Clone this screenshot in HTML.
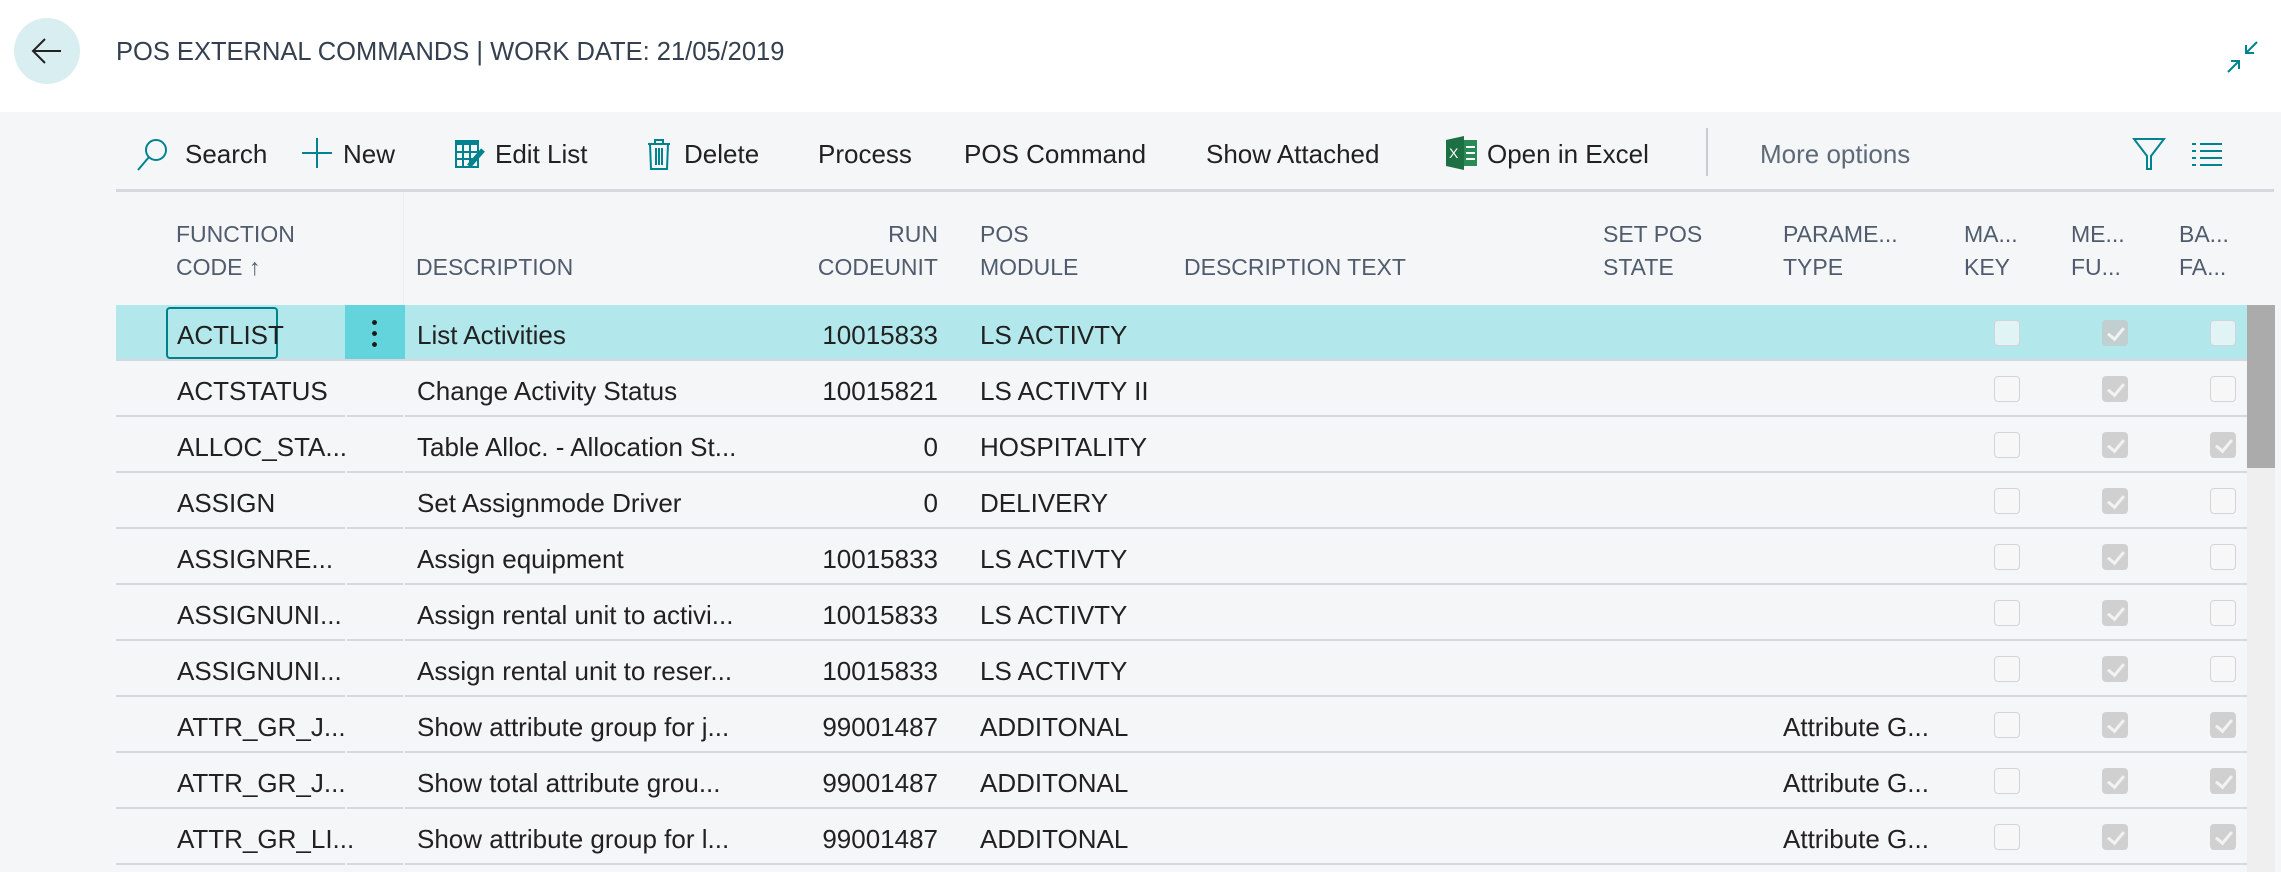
<!DOCTYPE html>
<html><head><meta charset="utf-8"><style>
*{box-sizing:border-box;margin:0;padding:0}
body{width:2281px;height:872px;overflow:hidden;background:#f5f6f8;font-family:"Liberation Sans",sans-serif;position:relative;color:#212121}
.hdr{position:absolute;left:0;top:0;width:2281px;height:112px;background:#fff}
.abs{position:absolute;white-space:nowrap}
.tb{font-size:26px;color:#212121;top:139px;line-height:30px}
.th{font-size:23px;color:#505c6d;line-height:33px}
.row{position:absolute;left:116px;width:2131px;height:56px;border-bottom:2px solid #d6d8dd}
.c{position:absolute;top:3px;line-height:54px;font-size:26px;white-space:nowrap}
.cb{position:absolute;top:15px;width:26px;height:26px;border:1.5px solid #d2d4d8;border-radius:4px;background:#f7f7f7}
.ck{background:#d0d0d0;border-color:#d0d0d0}
.ck::after{content:"";position:absolute;left:8px;top:3px;width:7px;height:13px;border:solid #f2f2f2;border-width:0 3px 3px 0;transform:rotate(40deg)}
</style></head><body>
<div class="hdr"></div>
<div class="abs" style="left:14px;top:18px;width:66px;height:66px;border-radius:50%;background:#d9eef1"></div>
<svg class="abs" style="left:30px;top:34px" width="34" height="34" viewBox="0 0 34 34"><path d="M31 17H4M15 5L3 17l12 12" fill="none" stroke="#222" stroke-width="2"/></svg>
<div class="abs" style="left:116px;top:37px;font-size:25.5px;color:#34404f;line-height:30px">POS EXTERNAL COMMANDS | WORK DATE: 21/05/2019</div>
<svg class="abs" style="left:2226px;top:40px" width="34" height="34" viewBox="0 0 34 34" fill="none" stroke="#00838f" stroke-width="2"><path d="M31 2L20 13M20 5v8h8M2 32l11-11M13 29v-8H5"/></svg>

<svg class="abs" style="left:135px;top:137px" width="34" height="34" viewBox="0 0 34 34" fill="none" stroke="#00838f" stroke-width="2"><circle cx="21" cy="13" r="10"/><path d="M14 20L3 33"/></svg>
<div class="abs tb" style="left:185px">Search</div>
<svg class="abs" style="left:302px;top:138px" width="30" height="30" viewBox="0 0 30 30" stroke="#00838f" stroke-width="2"><path d="M15 0v30M0 15h30"/></svg>
<div class="abs tb" style="left:343px">New</div>
<svg class="abs" style="left:455px;top:140px" width="30" height="28" viewBox="0 0 30 28"><rect x="0" y="0" width="24" height="5" fill="#00838f"/><path d="M1 5v22h22V5M1 12h22M1 19h22M8 5v22M15 5v22" fill="none" stroke="#00838f" stroke-width="2"/><path d="M14 26l14-16" stroke="#00838f" stroke-width="5"/></svg>
<div class="abs tb" style="left:495px">Edit List</div>
<svg class="abs" style="left:647px;top:138px" width="24" height="32" viewBox="0 0 24 32" fill="none" stroke="#00838f" stroke-width="2"><path d="M1 6h22M8 6V2h8v4M3 6l1 25h16l1-25M9 10v17M12 10v17M15 10v17"/></svg>
<div class="abs tb" style="left:684px">Delete</div>
<div class="abs tb" style="left:818px">Process</div>
<div class="abs tb" style="left:964px">POS Command</div>
<div class="abs tb" style="left:1206px">Show Attached</div>
<svg class="abs" style="left:1446px;top:136px" width="32" height="34" viewBox="0 0 32 34"><path d="M0 4l18-4v34L0 30z" fill="#1d7044"/><rect x="18" y="4" width="13" height="26" fill="#2a8a55"/><path d="M20 11h9M20 17h9M20 23h9" stroke="#fff" stroke-width="2"/><text x="3" y="22" font-size="14" fill="#fff" font-family="Liberation Sans">X</text></svg>
<div class="abs tb" style="left:1487px">Open in Excel</div>
<div class="abs" style="left:1706px;top:128px;width:2px;height:48px;background:#c8cbd0"></div>
<div class="abs tb" style="left:1760px;color:#5e6a78">More options</div>
<svg class="abs" style="left:2132px;top:136px" width="34" height="34" viewBox="0 0 34 34" fill="none" stroke="#00838f" stroke-width="2"><path d="M2 3h30L19 20v13h-4V20z"/></svg>
<svg class="abs" style="left:2192px;top:142px" width="30" height="24" viewBox="0 0 30 24" stroke="#00838f" stroke-width="2"><path d="M0 2h4M8 2h22M0 9h4M8 9h22M0 16h4M8 16h22M0 23h4M8 23h22"/></svg>

<div class="abs" style="left:116px;top:189px;width:2158px;height:3px;background:#d6d8dd"></div>
<div class="abs" style="left:403px;top:192px;width:1px;height:113px;background:#eceef1"></div>
<div class="abs th" style="left:176px;top:218px">FUNCTION<br>CODE ↑</div>
<div class="abs th" style="left:416px;top:251px">DESCRIPTION</div>
<div class="abs th" style="left:760px;width:178px;text-align:right;top:218px">RUN<br>CODEUNIT</div>
<div class="abs th" style="left:980px;top:218px">POS<br>MODULE</div>
<div class="abs th" style="left:1184px;top:251px">DESCRIPTION TEXT</div>
<div class="abs th" style="left:1603px;top:218px">SET POS<br>STATE</div>
<div class="abs th" style="left:1783px;top:218px">PARAME...<br>TYPE</div>
<div class="abs th" style="left:1964px;top:218px">MA...<br>KEY</div>
<div class="abs th" style="left:2071px;top:218px">ME...<br>FU...</div>
<div class="abs th" style="left:2179px;top:218px">BA...<br>FA...</div>

<div class="abs" style="left:2247px;top:305px;width:28px;height:567px;background:#efefef"></div>
<div class="abs" style="left:2247px;top:305px;width:28px;height:163px;background:#ababab"></div>

<div id="rows"></div>
<script>
var d=[["ACTLIST","List Activities","10015833","LS ACTIVTY","",0],
["ACTSTATUS","Change Activity Status","10015821","LS ACTIVTY II","",0],
["ALLOC_STA...","Table Alloc. - Allocation St...","0","HOSPITALITY","",1],
["ASSIGN","Set Assignmode Driver","0","DELIVERY","",0],
["ASSIGNRE...","Assign equipment","10015833","LS ACTIVTY","",0],
["ASSIGNUNI...","Assign rental unit to activi...","10015833","LS ACTIVTY","",0],
["ASSIGNUNI...","Assign rental unit to reser...","10015833","LS ACTIVTY","",0],
["ATTR_GR_J...","Show attribute group for j...","99001487","ADDITONAL","Attribute G...",1],
["ATTR_GR_J...","Show total attribute grou...","99001487","ADDITONAL","Attribute G...",1],
["ATTR_GR_LI...","Show attribute group for l...","99001487","ADDITONAL","Attribute G...",1]];
var h="";
d.forEach(function(r,i){
var top=305+i*56;var sel=i==0;
h+='<div class="row" style="top:'+top+'px;'+(sel?'background:#b2e8ec;':'')+'">';
if(sel){h+='<div class="abs" style="left:229px;top:0;width:60px;height:54px;background:#63d3dc"></div><div class="abs" style="left:256px;top:12px;width:5px;height:30px;background:radial-gradient(circle,#1a1a1a 2.2px,transparent 2.6px) 0 0/5px 11px repeat-y"></div><div class="abs" style="left:50px;top:2px;width:112px;height:52px;border:2px solid #00808a;border-radius:4px"></div>';}
else{h+='<div class="abs" style="left:229px;top:54px;width:2px;height:2px;background:#f5f6f8"></div><div class="abs" style="left:287px;top:54px;width:2px;height:2px;background:#f5f6f8"></div>';}
h+='<div class="c" style="left:61px">'+r[0]+'</div><div class="c" style="left:301px">'+r[1]+'</div><div class="c" style="left:600px;width:222px;text-align:right">'+r[2]+'</div><div class="c" style="left:864px">'+r[3]+'</div><div class="c" style="left:1667px">'+r[4]+'</div>';
var bg=sel?'background:#e0f3f5;':'';
h+='<div class="cb" style="left:1878px;'+bg+'"></div><div class="cb ck" style="left:1986px;'+(sel?'background:#c2cfd0;border-color:#c2cfd0':'')+'"></div><div class="cb'+(r[5]?' ck':'')+'" style="left:2094px;'+(r[5]?'':bg)+'"></div>';
h+='</div>';});
document.getElementById("rows").innerHTML=h;
</script>
</body></html>
